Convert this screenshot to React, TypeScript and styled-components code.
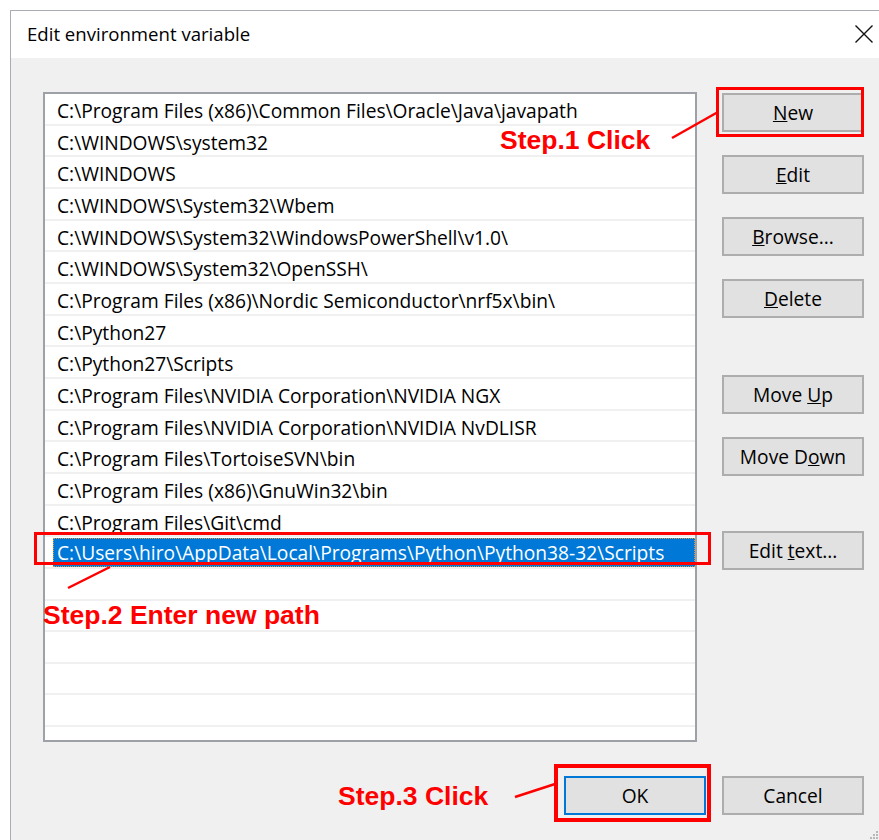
import React from "react";
import styled, { createGlobalStyle } from "styled-components";

const GlobalStyle = createGlobalStyle`
  html, body {
    margin: 0;
    padding: 0;
    background: #ffffff;
    overflow: hidden;
  }
  body {
    font-family: "Open Sans", "Noto Sans", sans-serif;
    color: #000000;
  }
`;

const paths = [
  "C:\\Program Files (x86)\\Common Files\\Oracle\\Java\\javapath",
  "C:\\WINDOWS\\system32",
  "C:\\WINDOWS",
  "C:\\WINDOWS\\System32\\Wbem",
  "C:\\WINDOWS\\System32\\WindowsPowerShell\\v1.0\\",
  "C:\\WINDOWS\\System32\\OpenSSH\\",
  "C:\\Program Files (x86)\\Nordic Semiconductor\\nrf5x\\bin\\",
  "C:\\Python27",
  "C:\\Python27\\Scripts",
  "C:\\Program Files\\NVIDIA Corporation\\NVIDIA NGX",
  "C:\\Program Files\\NVIDIA Corporation\\NVIDIA NvDLISR",
  "C:\\Program Files\\TortoiseSVN\\bin",
  "C:\\Program Files (x86)\\GnuWin32\\bin",
  "C:\\Program Files\\Git\\cmd",
];

const newPath =
  "C:\\Users\\hiro\\AppData\\Local\\Programs\\Python\\Python38-32\\Scripts";

const EMPTY_ROWS = 5;

const Page = styled.div`
  position: relative;
  width: 879px;
  height: 840px;
  overflow: hidden;
  padding: 10px 0 0 10px;
  box-sizing: border-box;
`;

const Window = styled.div`
  width: 880px;
  height: 840px;
  border-left: 1px solid #a9acb2;
  border-top: 1px solid #a9acb2;
  background: #f0f0f0;
  display: flex;
  flex-direction: column;
`;

const TitleBar = styled.div`
  height: 47px;
  flex: none;
  background: #ffffff;
  display: flex;
  align-items: center;
  justify-content: space-between;
  padding: 0 18px 2px 16px;
  box-sizing: border-box;
`;

const Title = styled.span`
  font-size: 18.6px;
  color: #000000;
`;

const CloseIcon = styled.svg`
  width: 18px;
  height: 18px;
  display: block;
`;

const Body = styled.div`
  padding: 34px 0 0 32px;
`;

const Content = styled.div`
  display: grid;
  grid-template-columns: 654px 142px;
  column-gap: 25px;
  align-items: start;
`;

const ListBox = styled.div`
  height: 650px;
  box-sizing: border-box;
  border: 2px solid #9ea2a8;
  background: #ffffff;
  overflow: hidden;
`;

const Row = styled.div<{ $selected?: boolean }>`
  height: 31.67px;
  box-sizing: border-box;
  border-bottom: 2px solid #f0f0f0;
  padding: ${(p) => (p.$selected ? "1px 0 0 8px" : "5px 0 0 12px")};
  display: flex;
  font-size: 19.2px;
  line-height: 24px;
  white-space: nowrap;
  overflow: hidden;
`;

const EditField = styled.div`
  flex: 1;
  height: 29px;
  box-sizing: border-box;
  padding-left: 4px;
  background: #0078d7;
  color: #ffffff;
  line-height: 29px;
  outline: 1px dotted #d99a4a;
  outline-offset: -1px;
`;

const ButtonColumn = styled.div`
  display: flex;
  flex-direction: column;
  gap: 23px;
  padding-top: 1px;
`;

const DialogButton = styled.button<{ $default?: boolean; $spaceBefore?: number }>`
  width: 142px;
  height: 39px;
  margin: ${(p) => p.$spaceBefore ?? 0}px 0 0 0;
  padding: 0;
  box-sizing: border-box;
  background: #e1e1e1;
  border: 2px solid ${(p) => (p.$default ? "#0078d7" : "#adadad")};
  font-family: "Open Sans", "Noto Sans", sans-serif;
  font-size: 19.2px;
  color: #000000;
  text-align: center;
  white-space: nowrap;
  cursor: default;
`;

const Footer = styled.div`
  width: 821px;
  margin-top: 34px;
  display: flex;
  justify-content: flex-end;
  gap: 16px;
`;

/* red callouts drawn on top of the dialog */
const Overlay = styled.div`
  position: absolute;
  inset: 0;
  pointer-events: none;
`;

const Marker = styled.div<{ $x: number; $y: number; $w: number; $h: number; $stroke?: number }>`
  position: absolute;
  left: ${(p) => p.$x}px;
  top: ${(p) => p.$y}px;
  width: ${(p) => p.$w}px;
  height: ${(p) => p.$h}px;
  box-sizing: border-box;
  border: ${(p) => p.$stroke ?? 3}px solid #ff0000;
`;

const StepLabel = styled.div<{ $x: number; $y: number }>`
  position: absolute;
  left: ${(p) => p.$x}px;
  top: ${(p) => p.$y}px;
  font-family: "Liberation Sans", Arial, sans-serif;
  font-weight: bold;
  font-size: 26.5px;
  line-height: 26px;
  color: #ff0000;
  white-space: nowrap;
`;

const Leaders = styled.svg`
  position: absolute;
  left: 0;
  top: 0;
  width: 879px;
  height: 840px;
`;

const Grip = styled.svg`
  position: absolute;
  right: 1px;
  bottom: 1px;
  width: 9px;
  height: 9px;
`;

export default function App() {
  return (
    <Page>
      <GlobalStyle />
      <Window>
        <TitleBar>
          <Title>Edit environment variable</Title>
          <CloseIcon viewBox="0 0 18 18">
            <path d="M0.5 0.5 L17.5 17.5 M17.5 0.5 L0.5 17.5" stroke="#111111" strokeWidth="1.4" />
          </CloseIcon>
        </TitleBar>
        <Body>
          <Content>
            <ListBox>
              {paths.map((p) => (
                <Row key={p}>{p}</Row>
              ))}
              <Row $selected>
                <EditField>{newPath}</EditField>
              </Row>
              {Array.from({ length: EMPTY_ROWS }).map((_, i) => (
                <Row key={`empty-${i}`} />
              ))}
            </ListBox>
            <ButtonColumn>
              <DialogButton>
                <u>N</u>ew
              </DialogButton>
              <DialogButton>
                <u>E</u>dit
              </DialogButton>
              <DialogButton>
                <u>B</u>rowse...
              </DialogButton>
              <DialogButton>
                <u>D</u>elete
              </DialogButton>
              <DialogButton $spaceBefore={34}>
                Move <u>U</u>p
              </DialogButton>
              <DialogButton>
                Move D<u>o</u>wn
              </DialogButton>
              <DialogButton $spaceBefore={32}>
                Edit <u>t</u>ext...
              </DialogButton>
            </ButtonColumn>
          </Content>
          <Footer>
            <DialogButton $default>OK</DialogButton>
            <DialogButton>Cancel</DialogButton>
          </Footer>
        </Body>
      </Window>

      <Overlay>
        <Marker $x={716} $y={87} $w={148} $h={50} />
        <Marker $x={34} $y={532} $w={677} $h={33} />
        <Marker $x={554} $y={764} $w={157} $h={58} $stroke={4} />
        <StepLabel $x={500} $y={127}>Step.1 Click</StepLabel>
        <StepLabel $x={43} $y={602}>Step.2 Enter new path</StepLabel>
        <StepLabel $x={338} $y={783}>Step.3 Click</StepLabel>
        <Leaders viewBox="0 0 879 840">
          <line x1="672" y1="138" x2="718" y2="112" stroke="#ff0000" strokeWidth="2.5" />
          <line x1="110" y1="567" x2="68" y2="588" stroke="#ff0000" strokeWidth="2.5" />
          <line x1="515" y1="797" x2="555" y2="784" stroke="#ff0000" strokeWidth="2.5" />
        </Leaders>
        <Grip viewBox="0 0 9 9">
          <rect x="7" y="1" width="2" height="2" fill="#b8b8b8" />
          <rect x="4" y="4" width="2" height="2" fill="#b8b8b8" />
          <rect x="7" y="4" width="2" height="2" fill="#b8b8b8" />
          <rect x="1" y="7" width="2" height="2" fill="#b8b8b8" />
          <rect x="4" y="7" width="2" height="2" fill="#b8b8b8" />
          <rect x="7" y="7" width="2" height="2" fill="#b8b8b8" />
        </Grip>
      </Overlay>
    </Page>
  );
}
